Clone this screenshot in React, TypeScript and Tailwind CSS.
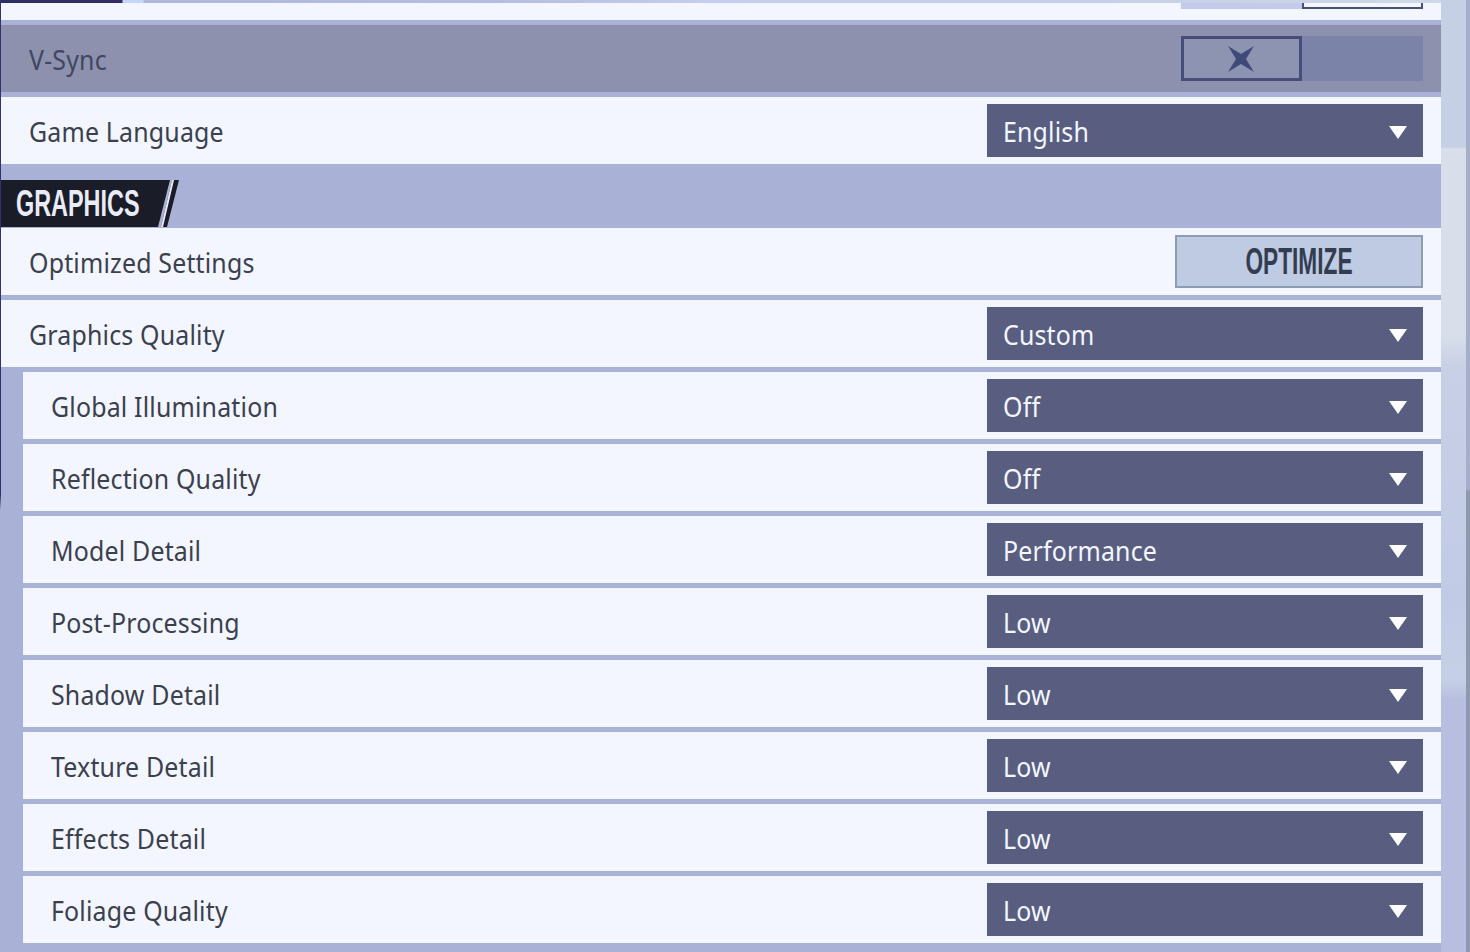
const SUB_ROWS = [
  ['Global Illumination', 'Off'],
  ['Reflection Quality', 'Off'],
  ['Model Detail', 'Performance'],
  ['Post-Processing', 'Low'],
  ['Shadow Detail', 'Low'],
  ['Texture Detail', 'Low'],
  ['Effects Detail', 'Low'],
  ['Foliage Quality', 'Low'],
];

function Label({ text }: { text: string }) {
  return <span className="inline-block origin-left scale-x-[0.89] whitespace-nowrap">{text}</span>;
}

function Select({ value }: { value: string }) {
  return (
    <div className="flex h-[53px] w-[436px] items-center justify-between bg-[#595e80] pl-[16px] pr-[15px] text-[#f3f6ff]">
      <Label text={value} />
      <svg width="20" height="14" viewBox="0 0 20 14" className="mt-[2px]">
        <path d="M1 1 H19 L10 14 Z" fill="#fff" />
      </svg>
    </div>
  );
}

function Row({ label, value, sub }: { label: string; value: string; sub?: boolean }) {
  return (
    <div className={`flex h-[67px] items-center justify-between bg-[#f3f6ff] pr-[18px] ${sub ? 'ml-[22px] pl-[28px]' : 'pl-[28px]'}`}>
      <Label text={label} />
      <Select value={value} />
    </div>
  );
}

function Sep() {
  return <div className="h-[5px] bg-[#a9b2d6]" />;
}

export default function App() {
  return (
    <div className="flex h-[952px] w-[1470px] overflow-hidden bg-[#c5d0e5] font-['Noto_Sans','Lato',sans-serif] text-[28px] tracking-[0.2px] text-[#3b404e]">
      <div className="w-px bg-[linear-gradient(to_bottom,#33336b_0,#33336b_495px,#a9b2d6_510px)]" />
      <div className="flex w-[1440px] flex-col">
        <div className="h-[3px] bg-[linear-gradient(to_right,#2e2e63_0,#2e2e63_121px,#c8d4ff_122px,#c8d4ff_142px,#b0b7da_143px,#b5bde0_500px,#c5cdee_700px,#c5d0e5_1100px,#cdd8e8_1440px)]" />
        <div className="flex h-[17px] justify-end bg-[#f3f6ff] pr-[18px]">
          <div className="flex h-[6px] w-[242px] justify-end bg-[#c3caeb]">
            <div className="h-[6px] w-[121px] border-x-2 border-b-2 border-[#4b5079] bg-[#f3f6ff]" />
          </div>
        </div>
        <Sep />
        <div className="flex h-[67px] items-center justify-between bg-[#8d91ad] pl-[28px] pr-[18px] text-[#414763]">
          <Label text="V-Sync" />
          <div className="flex h-[45px] w-[242px] bg-[#7c83a9]">
            <div className="flex w-[121px] items-center justify-center border-[3px] border-[#454d78] bg-[#8d94b1]">
              <svg width="28" height="28" viewBox="0 0 28 28" className="ml-[-2px]">
                <path d="M1 1 L14 9 L27 1 L19 14 L27 27 L14 19 L1 27 L9 14 Z" fill="#3f4a78" />
              </svg>
            </div>
          </div>
        </div>
        <Sep />
        <Row label="Game Language" value="English" />
        <div className="flex h-[64px] items-end bg-[#a9b2d6] pb-px">
          <div className="flex h-[47px] w-[169px] items-center bg-[#1a1c28] pl-[15px] font-['Liberation_Sans',sans-serif] text-[36px] font-bold tracking-normal text-[#e9ecf6] [clip-path:polygon(0_0,100%_0,calc(100%-12px)_100%,0_100%)]">
            <span className="inline-block w-[124px] origin-left scale-x-[0.65] whitespace-nowrap">GRAPHICS</span>
          </div>
          <svg width="20" height="47" viewBox="0 0 20 47" className="ml-[-9px]">
            <path d="M11 0 H18 L6 47 H0 Z" fill="#1a1c28" />
            <path d="M11 0 H13 L2 47 H0 Z" fill="#e9ecf6" />
          </svg>
        </div>
        <div className="flex h-[67px] items-center justify-between bg-[#f3f6ff] pl-[28px] pr-[18px]">
          <Label text="Optimized Settings" />
          <button className="flex h-[53px] w-[248px] items-center justify-center border-2 border-[#8b9cb4] bg-[#bfcae3] font-['Liberation_Sans',sans-serif] text-[36px] font-bold tracking-normal text-[#333d50]">
            <span className="inline-block scale-x-[0.63] whitespace-nowrap">OPTIMIZE</span>
          </button>
        </div>
        <Sep />
        <Row label="Graphics Quality" value="Custom" />
        <Sep />
        <div className="flex flex-col bg-[#a9b2d6]">
          {SUB_ROWS.map(([label, value], i) => (
            <div key={label}>
              <Row label={label} value={value} sub />
              {i < SUB_ROWS.length - 1 && <Sep />}
            </div>
          ))}
        </div>
        <div className="flex-1 bg-[#a9b2d6]" />
      </div>
      <div className="flex flex-1">
        <div className="w-[25px] bg-[linear-gradient(to_bottom,#c5d0e5_0,#c5d0e5_147px,#d8dfeb_149px,#d8dfeb_335px,#c8d0e6_365px,#c2cbe6_600px,#c5d0e6_680px,#b7bedf_700px,#b7bedf_952px)]" />
        <div className="w-[4px] bg-[linear-gradient(to_bottom,#a5aecb_0,#a5aecb_488px,#8f99ae_492px,#8f99ae_952px)]" />
      </div>
    </div>
  );
}
